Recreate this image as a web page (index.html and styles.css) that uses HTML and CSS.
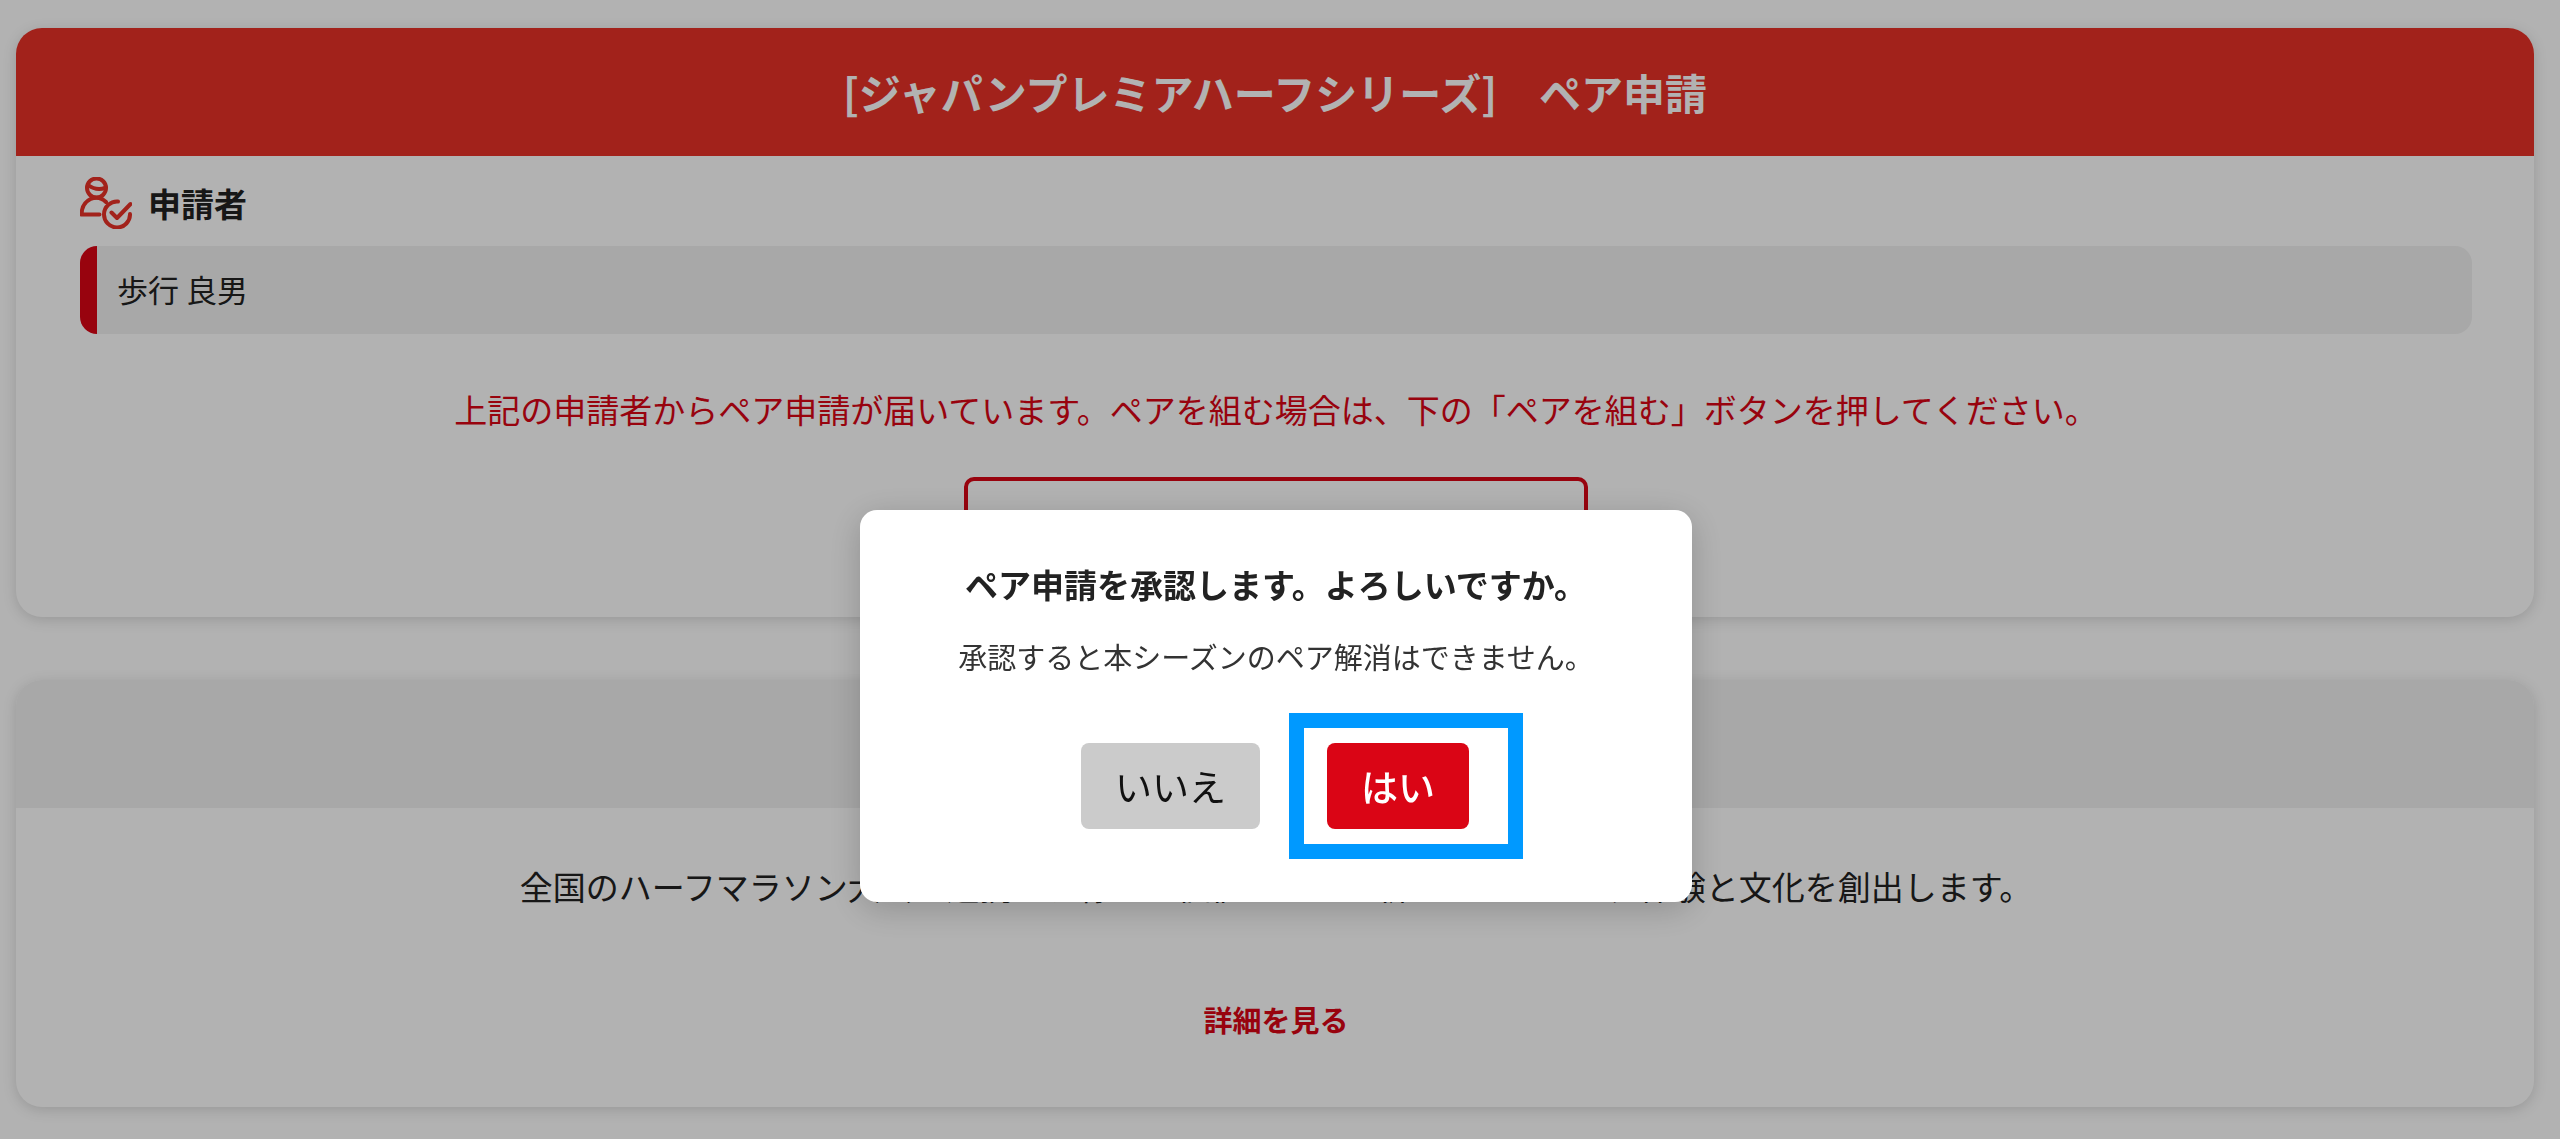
FILE: index.html
```html
<!DOCTYPE html>
<html lang="ja">
<head>
<meta charset="utf-8">
<meta name="viewport" content="width=device-width, initial-scale=1">
<title>ペア申請</title>
<link rel="stylesheet" href="styles.css">
</head>
<body>
<main class="page">
  <section class="card">
    <h1 class="card-header card-header-primary">[ジャパンプレミアハーフシリーズ]　ペア申請</h1>
    <div class="card-body">
      <h2 class="label">
        <svg class="label-icon" viewBox="0 0 52 52" aria-hidden="true">
          <circle cx="16.500" cy="11" r="9.500"/>
          <path d="M8 8q8 6 17 3M1.500 37.500h18M1.500 37.500C2 22 17 16 26 25"/>
          <path d="M38 24.500A13 13 0 1 0 50 37M31.500 35.500l5.500 5.500L50.500 27"/>
        </svg>
        申請者
      </h2>
      <p class="applicant">歩行 良男</p>
      <p class="notice">上記の申請者からペア申請が届いています。ペアを組む場合は、下の「ペアを組む」ボタンを押してください。</p>
      <button class="pair-button" type="button">ペアを組む</button>
    </div>
  </section>
  <section class="card">
    <div class="card-header"></div>
    <div class="card-body about">
      <p class="about-text">全国のハーフマラソン大会が連携し、様々な価値をつなぎ新たなランニング体験と文化を創出します。</p>
      <a class="detail-link" href="#">詳細を見る</a>
    </div>
  </section>
</main>
<div class="overlay">
  <div class="dialog" role="dialog" aria-modal="true" aria-labelledby="dialog-title">
    <h2 class="dialog-title" id="dialog-title">ペア申請を承認します。よろしいですか。</h2>
    <p class="dialog-text">承認すると本シーズンのペア解消はできません。</p>
    <div class="dialog-actions">
      <button class="dialog-button" type="button">いいえ</button>
      <div class="highlight"><button class="dialog-button dialog-button-yes" type="button">はい</button></div>
    </div>
  </div>
</div>
</body>
</html>
```
FILE: styles.css
```css
* {
  box-sizing: border-box;
}

body {
  margin: 0;
  background: #fff;
  color: #222;
  font-family: "Noto Sans CJK JP", "Noto Sans", sans-serif;
  overflow: hidden;
}

h1, h2, p {
  margin: 0;
}

button {
  font-family: inherit;
}

.page {
  display: flex;
  flex-direction: column;
  gap: 63px;
  padding: 28px 26px 32px 16px;
}

.card {
  border-radius: 26px;
  background: #fff;
  box-shadow: 0 3px 14px rgba(0, 0, 0, 0.15);
  overflow: hidden;
}

.card-header {
  min-height: 128px;
  padding: 34px 32px;
  background: #f1f1f1;
  font-size: 42px;
  line-height: 60px;
  text-align: center;
}

.card-header-primary {
  background: #e83127;
  color: #fff;
}

.card-body {
  display: flex;
  flex-direction: column;
  padding: 21px 62px 32px 64px;
}

.label {
  display: flex;
  align-items: flex-start;
  gap: 16px;
  font-size: 33px;
  line-height: 52px;
}

.label-icon {
  width: 52px;
  height: 52px;
  fill: none;
  stroke: #e83127;
  stroke-width: 4;
  stroke-linecap: round;
  stroke-linejoin: round;
}

.applicant {
  margin-top: 17px;
  padding: 19px 20px 21px;
  border-left: 17px solid #da0515;
  border-radius: 17px;
  background: #f1f1f1;
  font-size: 31px;
  line-height: 48px;
}

.notice {
  margin: 49px 0 42px;
  color: #da0515;
  font-size: 33px;
  line-height: 52px;
  text-align: center;
}

.pair-button {
  align-self: center;
  width: 624px;
  height: 108px;
  border: 4px solid #da0515;
  border-radius: 10px;
  background: #fff;
  color: #da0515;
  font-size: 33px;
}

.about {
  align-items: center;
  gap: 80px;
  padding-top: 51px;
  padding-bottom: 62px;
}

.about-text {
  font-size: 33px;
  line-height: 54px;
}

.detail-link {
  color: #da0515;
  font-size: 29px;
  font-weight: 700;
  line-height: 52px;
  text-decoration: none;
}

.overlay {
  position: fixed;
  inset: 0;
  display: flex;
  align-items: center;
  justify-content: center;
  padding: 273px 8px 0 0;
  background: rgba(0, 0, 0, 0.3);
}

.dialog {
  width: 832px;
  padding: 48px 32px 43px;
  border-radius: 17px;
  background: #fff;
  box-shadow: 0 7px 34px rgba(0, 0, 0, 0.2);
  text-align: center;
}

.dialog-title {
  font-size: 33px;
  line-height: 52px;
}

.dialog-text {
  margin-top: 20px;
  color: #333;
  font-size: 29px;
  line-height: 52px;
}

.dialog-actions {
  display: flex;
  align-items: center;
  justify-content: center;
  gap: 29px;
  margin: 31px 0 0 52px;
}

.highlight {
  padding: 15px 39px 15px 23px;
  border: 15px solid #0099ff;
}

.dialog-button {
  display: block;
  padding: 15px 34px;
  border: 0;
  border-radius: 8px;
  background: #cbcbcb;
  color: #111;
  font-size: 37px;
  line-height: 56px;
}

.dialog-button-yes {
  background: #da0515;
  color: #fff;
  font-weight: 500;
}
```
